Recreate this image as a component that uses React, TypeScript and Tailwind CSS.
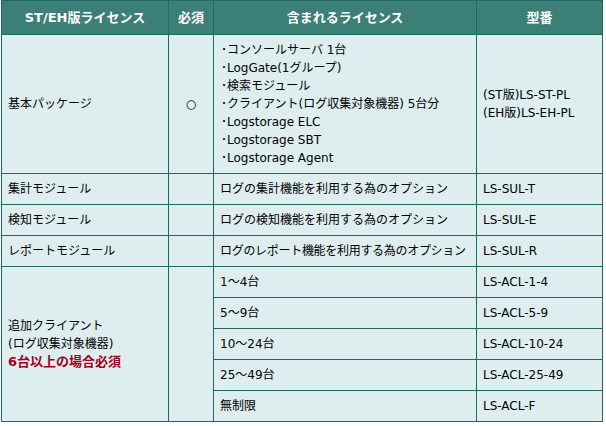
import React from "react";

const font = { fontFamily: '"DejaVu Sans", "Noto Sans CJK JP", sans-serif' };

export default function App() {
  const td = "border border-[#1b6b62] bg-[#deeeee] px-[6px] align-middle whitespace-nowrap";
  const th = "border border-[#1b6b62] bg-[#3b7f77] text-white font-bold text-[13px] text-center align-middle";
  const bullets = [
    "･コンソールサーバ 1台",
    "･LogGate(1グループ)",
    "･検索モジュール",
    "･クライアント(ログ収集対象機器) 5台分",
    "･Logstorage ELC",
    "･Logstorage SBT",
    "･Logstorage Agent",
  ];
  const sub = [
    ["1～4台", "LS-ACL-1-4"],
    ["5～9台", "LS-ACL-5-9"],
    ["10～24台", "LS-ACL-10-24"],
    ["25～49台", "LS-ACL-25-49"],
    ["無制限", "LS-ACL-F"],
  ];
  return (
    <div className="w-[606px] h-[426px] bg-white text-black text-[12px] leading-[18px]" style={font}>
      <table className="ml-px border-collapse table-fixed w-[601px]">
        <colgroup>
          <col className="w-[167px]" />
          <col className="w-[45px]" />
          <col className="w-[263px]" />
          <col className="w-[126px]" />
        </colgroup>
        <thead>
          <tr className="h-[34px]">
            <th className={th}>ST/EH版ライセンス</th>
            <th className={th}>必須</th>
            <th className={th}>含まれるライセンス</th>
            <th className={th}>型番</th>
          </tr>
        </thead>
        <tbody>
          <tr className="h-[139px]">
            <td className={td}>基本パッケージ</td>
            <td className={td + " text-center"}>○</td>
            <td className={td + " pl-[7px]"}>
              {bullets.map((b) => (
                <div key={b}>{b}</div>
              ))}
            </td>
            <td className={td}>
              <div>(ST版)LS-ST-PL</div>
              <div>(EH版)LS-EH-PL</div>
            </td>
          </tr>
          <tr className="h-[31px]">
            <td className={td}>集計モジュール</td>
            <td className={td}></td>
            <td className={td}>ログの集計機能を利用する為のオプション</td>
            <td className={td}>LS-SUL-T</td>
          </tr>
          <tr className="h-[31px]">
            <td className={td}>検知モジュール</td>
            <td className={td}></td>
            <td className={td}>ログの検知機能を利用する為のオプション</td>
            <td className={td}>LS-SUL-E</td>
          </tr>
          <tr className="h-[31px]">
            <td className={td}>レポートモジュール</td>
            <td className={td}></td>
            <td className={td + " tracking-[-0.3px]"}>ログのレポート機能を利用する為のオプション</td>
            <td className={td}>LS-SUL-R</td>
          </tr>
          {sub.map(([a, b], i) => (
            <tr key={b} className="h-[31px]">
              {i === 0 && (
                <>
                  <td className={td} rowSpan={5}>
                    <div>追加クライアント</div>
                    <div>(ログ収集対象機器)</div>
                    <div className="font-bold text-[#a0001e] text-[13px]">6台以上の場合必須</div>
                  </td>
                  <td className={td} rowSpan={5}></td>
                </>
              )}
              <td className={td}>{a}</td>
              <td className={td}>{b}</td>
            </tr>
          ))}
        </tbody>
      </table>
    </div>
  );
}
